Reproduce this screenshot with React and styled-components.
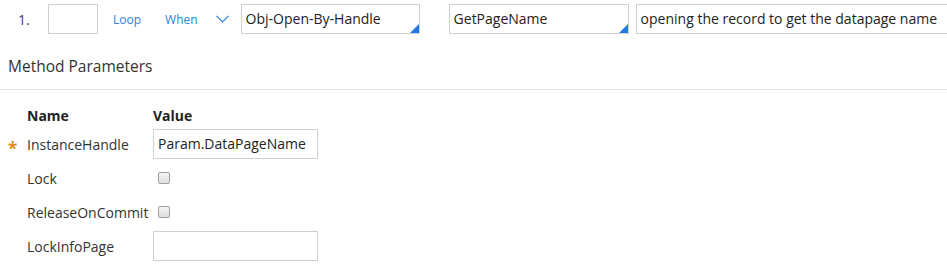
import React from 'react';
import styled, { createGlobalStyle } from 'styled-components';

const GlobalStyle = createGlobalStyle`
  body {
    margin: 0;
    background: #ffffff;
    font-family: "Open Sans", "Liberation Sans", sans-serif;
    color: #333333;
  }
`;

const Page = styled.div`
  width: 947px;
  height: 270px;
  overflow: hidden;
`;

const StepRow = styled.div`
  display: flex;
  align-items: center;
  height: 30px;
  padding-top: 4px;
  white-space: nowrap;

  & > * {
    flex-shrink: 0;
  }
`;

const StepNumber = styled.span`
  font-size: 14px;
  color: #444;
  margin-left: 18px;
  width: 30px;
`;

const Field = styled.div`
  position: relative;
  box-sizing: border-box;
  height: 30px;
  width: ${p => p.$width}px;
  margin-left: ${p => p.$gap || 0}px;
  border: 1px solid #cfcfcf;
  background: #fff;
  font-size: 14px;
  line-height: 28px;
  padding: 0 4px;
  color: #222;
  overflow: hidden;
`;

const Corner = styled.span`
  position: absolute;
  right: 0;
  bottom: 0;
  width: 0;
  height: 0;
  border-left: 9px solid transparent;
  border-bottom: 9px solid #1f7ae8;
`;

const LinkText = styled.span`
  font-size: 12px;
  color: #2f80db;
  margin-left: ${p => p.$gap}px;
`;

const Chevron = styled.svg`
  margin-left: 18px;
`;

const SectionTitle = styled.div`
  margin-top: 21px;
  padding: 0 8px 12px;
  font-size: 15.5px;
  color: #333;
  border-bottom: 1px solid #e6e6e6;
`;

const ParamGrid = styled.div`
  display: grid;
  grid-template-columns: 27px 126px 165px;
  grid-template-rows: 20px repeat(4, 30px);
  row-gap: 4px;
  align-items: center;
  margin-top: 15px;
`;

const HeadCell = styled.div`
  grid-column: ${p => p.$col};
  font-size: 14px;
  font-weight: 700;
  color: #222;
`;

const Star = styled.span`
  grid-column: 1;
  padding-left: 8px;
  padding-top: 9px;
  color: #e08a1e;
  font-size: 17px;
  font-weight: 700;
  line-height: 1;
`;

const ParamName = styled.div`
  grid-column: 2;
  font-size: 14px;
  color: #333;
  white-space: nowrap;
`;

const ValueInput = styled.div`
  grid-column: 3;
  box-sizing: border-box;
  height: 30px;
  border: 1px solid #cfcfcf;
  font-size: 14px;
  line-height: 28px;
  padding: 0 4px;
  color: #222;
`;

const CheckBox = styled.span`
  grid-column: 3;
  justify-self: start;
  box-sizing: border-box;
  width: 12px;
  height: 12px;
  margin-left: 5px;
  border: 1px solid #a0a0a0;
  border-radius: 2px;
  background: linear-gradient(#f4f4f4, #dedede);
`;

const params = [
  { name: 'InstanceHandle', required: true, type: 'text', value: 'Param.DataPageName' },
  { name: 'Lock', type: 'check' },
  { name: 'ReleaseOnCommit', type: 'check' },
  { name: 'LockInfoPage', type: 'text', value: '' },
];

export default function App() {
  return (
    <Page>
      <GlobalStyle />
      <StepRow>
        <StepNumber>1.</StepNumber>
        <Field $width={50} />
        <LinkText $gap={15}>Loop</LinkText>
        <LinkText $gap={24}>When</LinkText>
        <Chevron width="13" height="8" viewBox="0 0 13 8">
          <path d="M0.5 0.8 L6.5 6.8 L12.5 0.8" fill="none" stroke="#2f80db" strokeWidth="1.2" />
        </Chevron>
        <Field $width={179} $gap={12}>
          Obj-Open-By-Handle
          <Corner />
        </Field>
        <Field $width={180} $gap={29}>
          GetPageName
          <Corner />
        </Field>
        <Field $width={320} $gap={7}>
          opening the record to get the datapage name
        </Field>
      </StepRow>

      <SectionTitle>Method Parameters</SectionTitle>

      <ParamGrid>
        <HeadCell $col={2}>Name</HeadCell>
        <HeadCell $col={3}>Value</HeadCell>
        {params.map(p => (
          <React.Fragment key={p.name}>
            {p.required ? <Star>*</Star> : <span />}
            <ParamName>{p.name}</ParamName>
            {p.type === 'check' ? <CheckBox /> : <ValueInput>{p.value}</ValueInput>}
          </React.Fragment>
        ))}
      </ParamGrid>
    </Page>
  );
}
